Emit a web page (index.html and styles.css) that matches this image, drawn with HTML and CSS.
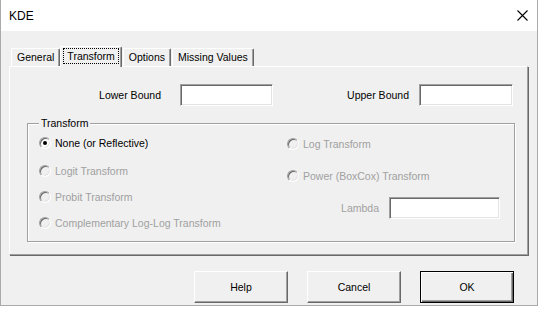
FILE: index.html
```html
<!DOCTYPE html>
<html lang="en">
<head>
    <meta charset="UTF-8">
    <meta name="viewport" content="width=device-width, initial-scale=1.0">
    <title>KDE</title>
    <link rel="stylesheet" href="styles.css">
</head>
<body>
    <div class="window">
        <div class="titlebar">
            <span class="title">KDE</span>
            <svg class="close" width="11" height="11" viewBox="0 0 11 11">
                <path d="M0.5 0.5 L10.5 10.5 M10.5 0.5 L0.5 10.5" stroke="#000" stroke-width="1.1" fill="none"/>
            </svg>
        </div>

        <div class="dialog-body">
            <div class="tabs">
                <div class="tab">General</div>
                <div class="tab active"><span class="focus">Transform</span></div>
                <div class="tab">Options</div>
                <div class="tab">Missing Values</div>
            </div>

            <div class="page">
                <div class="bounds">
                    <span class="bound-label lower">Lower Bound</span>
                    <div class="field lower-field"></div>
                    <span class="bound-label upper">Upper Bound</span>
                    <div class="field upper-field"></div>
                </div>

                <fieldset class="frame">
                    <legend>Transform</legend>
                    <div class="options">
                        <div class="col left-col">
                            <div class="option first"><span class="radio checked"></span><span>None (or Reflective)</span></div>
                            <div class="option disabled"><span class="radio"></span><span>Logit Transform</span></div>
                            <div class="option disabled"><span class="radio"></span><span>Probit Transform</span></div>
                            <div class="option disabled"><span class="radio"></span><span>Complementary Log-Log Transform</span></div>
                        </div>
                        <div class="col right-col">
                            <div class="option disabled log"><span class="radio"></span><span>Log Transform</span></div>
                            <div class="option disabled power"><span class="radio"></span><span>Power (BoxCox) Transform</span></div>
                            <div class="lambda-row">
                                <span class="lambda-label">Lambda</span>
                                <div class="field lambda-field"></div>
                            </div>
                        </div>
                    </div>
                </fieldset>
            </div>

            <div class="buttons">
                <div class="btn">Help</div>
                <div class="btn">Cancel</div>
                <div class="btn default">OK</div>
            </div>
        </div>
    </div>
</body>
</html>
```

FILE: styles.css
```css
body {
    margin: 0;
    background-color: #ffffff;
    font-family: "Liberation Sans", Arial, sans-serif;
    font-size: 10.5px;
    color: #000000;
}
.window {
    width: 538px;
    height: 306px;
    box-sizing: border-box;
    border: 1px solid #aaaaaa;
    border-top: none;
    background-color: #f0f0f0;
}
.titlebar {
    height: 31px;
    background-color: #ffffff;
    display: flex;
    align-items: center;
    justify-content: space-between;
    padding: 0 9px 0 8px;
}
.title {
    font-size: 12px;
}
.close {
    display: block;
}

/* tab strip */
.dialog-body {
    padding-top: 15px;
}
.tabs {
    display: flex;
    align-items: flex-end;
    height: 20px;
    margin-left: 10px;
}
.tab {
    height: 18px;
    box-sizing: border-box;
    padding: 0 5px;
    line-height: 17px;
    border-top: 1px solid #ffffff;
    border-left: 1px solid #ffffff;
    border-right: 1px solid #696969;
    box-shadow: inset -1px 0 0 #a0a0a0;
    border-radius: 2px 2px 0 0;
    margin-right: 1px;
}
.tab.active {
    height: 21px;
    margin: 0 -1px -1px -1px;
    padding: 1px 2px 0 2px;
    line-height: 14px;
    background-color: #f0f0f0;
    position: relative;
    z-index: 1;
}
.focus {
    display: inline-block;
    border: 1px dotted #000000;
    padding: 0 3px;
}
.tab.active + .tab {
    margin-left: 2px;
}

/* tab page */
.page {
    height: 189px;
    box-sizing: border-box;
    margin: 0 9px 0 8px;
    border-top: 1px solid #ffffff;
    border-left: 1px solid #ffffff;
    border-right: 1px solid #a0a0a0;
    border-bottom: 1px solid #a0a0a0;
    box-shadow: 1px 1px 0 #696969;
}
.bounds {
    display: flex;
    align-items: center;
    padding-top: 17px;
    height: 22px;
}
.bound-label {
    text-align: right;
}
.bound-label.lower {
    width: 151px;
    margin-right: 19px;
}
.bound-label.upper {
    width: 136px;
    margin-right: 10px;
}
.field {
    height: 22px;
    box-sizing: border-box;
    background-color: #ffffff;
    border: 1px solid;
    border-color: #a0a0a0 #ffffff #ffffff #a0a0a0;
    box-shadow: inset 1px 1px 0 #696969, inset -1px -1px 0 #e3e3e3;
}
.lower-field {
    width: 93px;
}
.upper-field {
    width: 94px;
}

/* transform frame */
.frame {
    width: 488px;
    box-sizing: border-box;
    margin: 11px 0 0 17px;
    padding: 0 0 10px 11px;
    border: 1px solid #a0a0a0;
    box-shadow: inset 1px 1px 0 #ffffff, 1px 1px 0 #ffffff;
}
.frame legend {
    padding: 0 2px;
    line-height: 13px;
    background-color: #f0f0f0;
}
.options {
    display: flex;
    padding-top: 5px;
}
.col {
    display: flex;
    flex-direction: column;
}
.left-col {
    width: 248px;
    gap: 10px;
}
.option {
    display: flex;
    align-items: center;
    gap: 4px;
    height: 16px;
}
.option.first {
    margin-bottom: 2px;
}
.option.disabled {
    color: #a0a0a0;
}
.option.log {
    margin-top: 1px;
}
.option.power {
    margin-top: 16px;
}
.radio {
    width: 12px;
    height: 12px;
    box-sizing: border-box;
    border-radius: 50%;
    background-color: #ffffff;
    border: 1px solid;
    border-color: #a0a0a0 #ffffff #ffffff #a0a0a0;
    box-shadow: inset 1px 1px 0 #696969, inset -1px -1px 0 #e3e3e3;
    display: flex;
    align-items: center;
    justify-content: center;
}
.disabled .radio {
    background-color: #f0f0f0;
}
.radio.checked::after {
    content: "";
    width: 4px;
    height: 4px;
    border-radius: 50%;
    background-color: #000000;
}
.lambda-row {
    display: flex;
    align-items: center;
    margin-top: 13px;
}
.lambda-label {
    width: 92px;
    text-align: right;
    margin-right: 10px;
    color: #a0a0a0;
}
.lambda-field {
    width: 111px;
}

/* bottom buttons */
.buttons {
    display: flex;
    justify-content: flex-end;
    gap: 19px;
    margin-top: 16px;
    padding-right: 23px;
}
.btn {
    width: 94px;
    height: 32px;
    box-sizing: border-box;
    display: flex;
    align-items: center;
    justify-content: center;
    border: 1px solid;
    border-color: #ffffff #696969 #696969 #ffffff;
    box-shadow: inset -1px -1px 0 #a0a0a0;
}
.btn.default {
    border-color: #000000;
    box-shadow: inset 1px 1px 0 #ffffff, inset -1px -1px 0 #696969, inset -2px -2px 0 #a0a0a0;
}
```
